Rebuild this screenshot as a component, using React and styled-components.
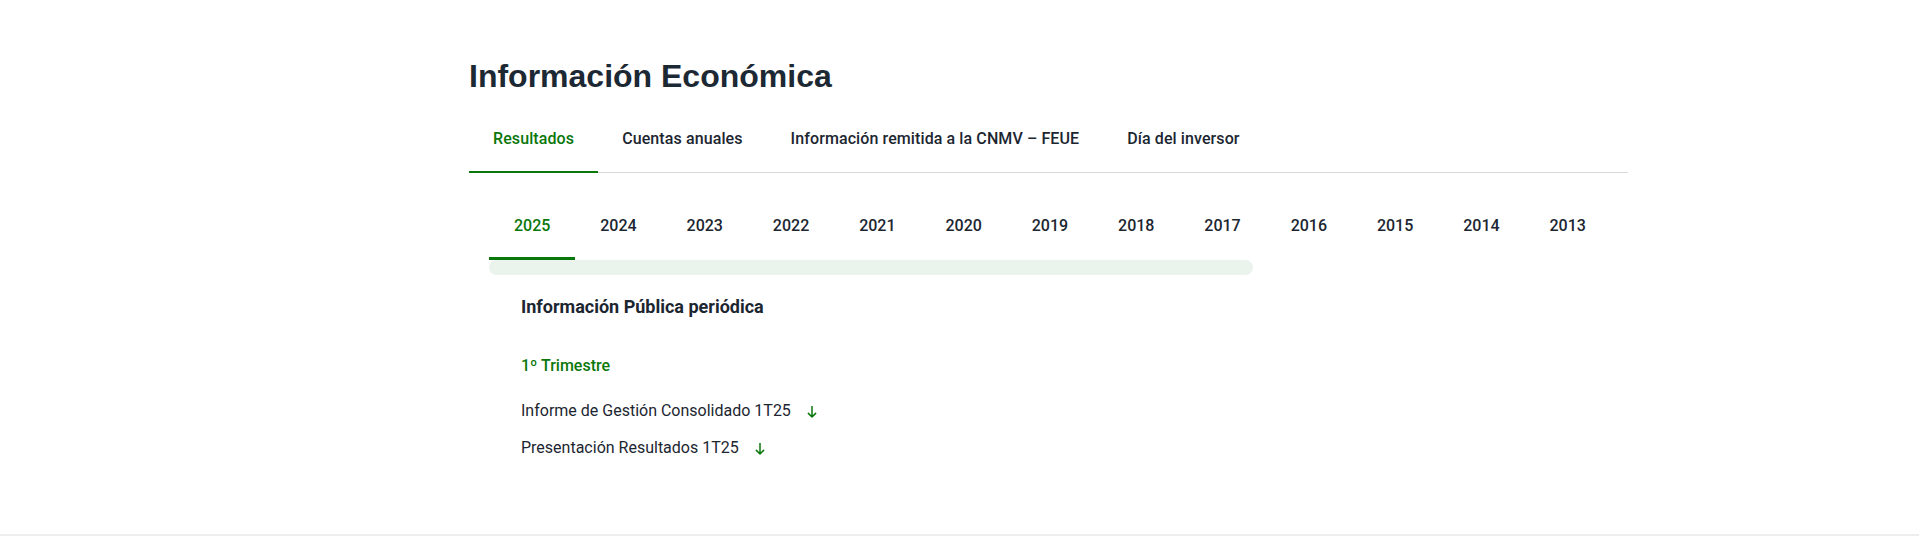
import React from 'react';
import styled, { createGlobalStyle } from 'styled-components';

const GlobalStyle = createGlobalStyle`
  html, body {
    margin: 0;
    padding: 0;
    background: #ffffff;
  }
  body {
    font-family: Roboto, "Liberation Sans", Arial, sans-serif;
    color: #1c2631;
  }
`;

const sections = ['Resultados', 'Cuentas anuales', 'Información remitida a la CNMV – FEUE', 'Día del inversor'];
const years = [];
for (let y = 2025; y >= 2013; y--) years.push(String(y));

const docs = [
  'Informe de Gestión Consolidado 1T25',
  'Presentación Resultados 1T25',
];

const DownArrow = () => (
  <svg width="10" height="12" viewBox="0 0 10 12" fill="none">
    <path d="M5 0.5V11M1.4 7.4L5 11l3.6-3.6" stroke="#0a770a" strokeWidth="1.5" strokeLinecap="round" strokeLinejoin="round" />
  </svg>
);

const App = () => (
  <>
    <GlobalStyle />
    <Page>
      <Wrapper>
        <Title>Información Económica</Title>
        <TabBar>
          {sections.map((s, i) => (
            <Tab key={s} $active={i === 0}>{s}</Tab>
          ))}
        </TabBar>
        <YearsBlock>
          <YearList>
            {years.map((y, i) => (
              <Year key={y} $active={i === 0}>{y}</Year>
            ))}
          </YearList>
          <ScrollTrack>
            <ScrollThumb />
          </ScrollTrack>
        </YearsBlock>
        <Content>
          <SectionTitle>Información Pública periódica</SectionTitle>
          <Quarter>1º Trimestre</Quarter>
          <DocList>
            {docs.map((d) => (
              <DocLink key={d} href="#">
                {d}
                <DownArrow />
              </DocLink>
            ))}
          </DocList>
        </Content>
      </Wrapper>
      <Footer />
    </Page>
  </>
);

export default App;

const Page = styled.div`
  min-height: 536px;
  display: flex;
  flex-direction: column;
`;

const Wrapper = styled.main`
  width: 1159px;
  margin-left: 469px;
  padding-top: 56px;
  flex: 1;
`;

const Title = styled.h1`
  margin: 0;
  font-family: Arial, "Liberation Sans", sans-serif;
  font-size: 32px;
  line-height: 40px;
  font-weight: 700;
  color: #1c2833;
`;

const TabBar = styled.nav`
  display: flex;
  margin-top: 9px;
  border-bottom: 1px solid #d9d9d9;
`;

const Tab = styled.a`
  display: block;
  padding: 22px 24px 20px;
  margin-bottom: -1px;
  font-size: 16px;
  line-height: 24px;
  font-weight: 500;
  letter-spacing: 0.1px;
  white-space: nowrap;
  color: ${(p) => (p.$active ? '#0a770a' : '#1c2631')};
  border-bottom: 2px solid ${(p) => (p.$active ? '#0a770a' : 'transparent')};
  cursor: pointer;
`;

const YearsBlock = styled.div`
  margin: 19px 20px 0;
`;

const YearList = styled.div`
  display: flex;
`;

const Year = styled.a`
  flex: 0 0 auto;
  display: block;
  width: 86.3px;
  box-sizing: border-box;
  text-align: center;
  padding: 22px 0 19px;
  font-size: 16px;
  line-height: 24px;
  font-weight: 500;
  color: ${(p) => (p.$active ? '#0a770a' : '#1c2631')};
  border-bottom: 3px solid ${(p) => (p.$active ? '#0a770a' : 'transparent')};
  cursor: pointer;
`;

const ScrollTrack = styled.div`
  height: 15px;
`;

const ScrollThumb = styled.div`
  width: 764px;
  height: 15px;
  border-radius: 8px;
  background: #eaf3ec;
`;

const Content = styled.section`
  padding: 20px 0 0 52px;
`;

const SectionTitle = styled.h3`
  margin: 0;
  font-size: 18px;
  line-height: 24px;
  font-weight: 700;
  color: #1c2631;
`;

const Quarter = styled.h4`
  margin: 35px 0 0;
  font-size: 16px;
  line-height: 24px;
  font-weight: 500;
  color: #0a770a;
`;

const DocList = styled.div`
  display: flex;
  flex-direction: column;
  gap: 13px;
  margin-top: 21px;
`;

const DocLink = styled.a`
  display: flex;
  align-items: center;
  gap: 16px;
  font-size: 16px;
  line-height: 24px;
  font-weight: 400;
  color: #1c2631;
  text-decoration: none;

  svg {
    margin-top: 1px;
  }
`;

const Footer = styled.footer`
  height: 0;
  border-top: 2px solid #eeeeee;
`;
